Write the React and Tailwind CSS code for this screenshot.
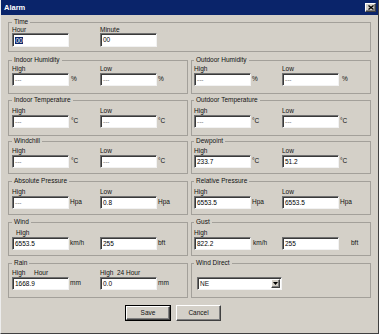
const SUNKEN =
  'bg-white border border-t-[#707070] border-l-[#707070] border-r-[#f2f2f2] border-b-[#f2f2f2] shadow-[inset_1px_1px_0_#3a3a3a]'
const RAISED =
  'bg-[#d4d0c8] border border-t-white border-l-white border-r-[#404040] border-b-[#404040] shadow-[inset_-1px_-1px_0_#808080]'

function Field({ value, h = 'h-[13px]', muted, children }) {
  return (
    <div className={`w-[57px] ${h} ${SUNKEN} flex items-center pl-[2px] ${muted ? 'text-[#7a7a7a]' : 'text-black'}`}>
      {children || value}
    </div>
  )
}

function Cell({ label, value, unit, unitCls = 'ml-[1px]', gap = 'mt-[1px]', h, labelCls = '' }) {
  return (
    <div className="flex flex-col">
      <div className={`h-[7px] leading-[7px] whitespace-pre ${labelCls}`}>{label}</div>
      <div className={`flex items-center ${gap}`}>
        <Field value={value} h={h} muted={value === '---'} />
        {unit && <span className={`${unitCls} leading-none`}>{unit}</span>}
      </div>
    </div>
  )
}

function Group({ title, h, pad = 'pl-[3px]', children }) {
  return (
    <fieldset className={`border border-[#a3a09a] ${pad} ${h}`}>
      <legend className="px-[2px] leading-[8px]">{title}</legend>
      {children}
    </fieldset>
  )
}

function Pair({ pt, left, right }) {
  return (
    <div className={`flex ${pt}`}>
      <div className="w-[88px] shrink-0">{left}</div>
      {right}
    </div>
  )
}

function Row({ mt, h, pt, left, right }) {
  return (
    <div className={`grid grid-cols-[180px_180px] gap-x-[3px] ${mt}`}>
      <Group title={left.title} h={h}>
        {left.body || (
          <Pair
            pt={pt}
            left={<Cell label="High" value={left.hi} unit={left.unit} unitCls={left.hiU} />}
            right={<Cell label="Low" value={left.lo} unit={left.unit} unitCls={left.loU} />}
          />
        )}
      </Group>
      <Group title={right.title} h={h} pad="pl-[2px]">
        {right.body || (
          <Pair
            pt={pt}
            left={<Cell label="High" value={right.hi} unit={right.unit} unitCls={right.hiU} />}
            right={<Cell label="Low" value={right.lo} unit={right.unit} unitCls={right.loU} />}
          />
        )}
      </Group>
    </div>
  )
}

export default function App() {
  return (
    <div className="w-[379px] h-[334px] bg-[#d4d0c8] border-l border-l-[#ededed] border-r border-r-[#404040] border-b border-b-[#404040] font-['Liberation_Sans',Arial,sans-serif] text-[6.5px] text-[#111] overflow-hidden flex flex-col">
      {/* title bar */}
      <div className="h-[15px] shrink-0 bg-[#0a246a] flex items-center justify-between pl-[3px] pr-[2px]">
        <span className="text-white font-bold text-[7.5px] leading-none">Alarm</span>
        <div className={`w-[11px] h-[9px] ${RAISED} flex items-center justify-center`}>
          <svg width="6" height="5" viewBox="0 0 6 5">
            <path d="M0.5 0.5 L5.5 4.5 M5.5 0.5 L0.5 4.5" stroke="#000" strokeWidth="1.3" />
          </svg>
        </div>
      </div>

      <div className="ml-[7px] w-[363px] flex flex-col">
        {/* Time */}
        <div className="mt-[3px]">
          <Group title="Time" h="h-[34px]">
            <div className="flex">
              <div className="w-[88px] shrink-0 flex flex-col">
                <div className="h-[7px] leading-[7px]">Hour</div>
                <Field h="h-[14px]">
                  <span className="bg-[#0a246a] text-white leading-[7px] px-[0.5px]">00</span>
                </Field>
              </div>
              <div className="flex flex-col">
                <div className="h-[7px] leading-[7px]">Minute</div>
                <Field h="h-[14px]" value="00" />
              </div>
            </div>
          </Group>
        </div>

        <Row
          mt="mt-[4px]"
          h="h-[38px]"
          pt="pt-[1px]"
          left={{ title: 'Indoor Humidity', hi: '---', lo: '---', unit: '%', hiU: 'ml-[2px]', loU: 'ml-[1px]' }}
          right={{ title: 'Outdoor Humidity', hi: '---', lo: '---', unit: '%', hiU: 'ml-[1px]', loU: 'ml-[3px]' }}
        />
        <Row
          mt="mt-[2px]"
          h="h-[40px]"
          pt="pt-[3px]"
          left={{ title: 'Indoor Temperature', hi: '---', lo: '---', unit: '°C', hiU: 'ml-[2px]', loU: 'ml-[1px]' }}
          right={{ title: 'Outdoor Temperature', hi: '---', lo: '---', unit: '°C', hiU: 'ml-[1px]', loU: 'ml-[1px]' }}
        />
        <Row
          mt="mt-[1px]"
          h="h-[37px]"
          pt="pt-[2px]"
          left={{ title: 'Windchill', hi: '---', lo: '---', unit: '°C', hiU: 'ml-[2px]', loU: 'ml-[1px]' }}
          right={{ title: 'Dewpoint', hi: '233.7', lo: '51.2', unit: '°C', hiU: 'ml-[1px]', loU: 'ml-[1px]' }}
        />
        <Row
          mt="mt-[3px]"
          h="h-[38px]"
          pt="pt-[3px]"
          left={{ title: 'Absolute Pressure', hi: '---', lo: '0.8', unit: 'Hpa', hiU: 'ml-[1px]', loU: 'ml-[1px]' }}
          right={{ title: 'Relative Pressure', hi: '6553.5', lo: '6553.5', unit: 'Hpa', hiU: 'ml-[1px]', loU: 'ml-[1px]' }}
        />
        <Row
          mt="mt-[3px]"
          h="h-[38px]"
          left={{
            title: 'Wind',
            body: (
              <Pair
                pt="pt-[3px]"
                left={<Cell label="High" labelCls="pl-[4px]" value="6553.5" unit="km/h" unitCls="ml-[1px]" />}
                right={<Cell label="" value="255" unit="bft" unitCls="ml-[1px]" />}
              />
            ),
          }}
          right={{
            title: 'Gust',
            body: (
              <Pair
                pt="pt-[3px]"
                left={<Cell label="High" value="822.2" unit="km/h" unitCls="ml-[2px]" />}
                right={<Cell label="" value="255" unit="bft" unitCls="ml-[12px]" />}
              />
            ),
          }}
        />
        <Row
          mt="mt-[3px]"
          h="h-[39px]"
          left={{
            title: 'Rain',
            body: (
              <Pair
                pt="pt-[2px]"
                left={
                  <Cell
                    label={
                      <span className="flex">
                        <span className="w-[22px]">High</span>Hour
                      </span>
                    }
                    value="1668.9"
                    unit="mm"
                    unitCls="ml-[1px]"
                  />
                }
                right={
                  <Cell
                    label={
                      <span className="flex">
                        <span className="w-[17px]">High</span>24 Hour
                      </span>
                    }
                    value="0.0"
                    unit="mm"
                    unitCls="ml-[1px]"
                  />
                }
              />
            ),
          }}
          right={{
            title: 'Wind Direct',
            body: (
              <div className="pt-[10px] pl-[3px]">
                <div className={`w-[85px] h-[13px] ${SUNKEN} flex items-center justify-between pl-[2px] pr-[1px]`}>
                  <span>NE</span>
                  <div className={`w-[9px] h-[9px] ${RAISED} flex items-center justify-center`}>
                    <svg width="5" height="3" viewBox="0 0 5 3">
                      <path d="M0 0 H5 L2.5 3 Z" fill="#000" />
                    </svg>
                  </div>
                </div>
              </div>
            ),
          }}
        />

        {/* buttons */}
        <div className="mt-[7px] ml-[117px] flex gap-[5px]">
          <div className="w-[46px] h-[16px] border border-black">
            <div className={`w-full h-full ${RAISED} flex items-center justify-center`}>Save</div>
          </div>
          <div className={`w-[45px] h-[16px] ${RAISED} flex items-center justify-center`}>Cancel</div>
        </div>
      </div>
    </div>
  )
}
